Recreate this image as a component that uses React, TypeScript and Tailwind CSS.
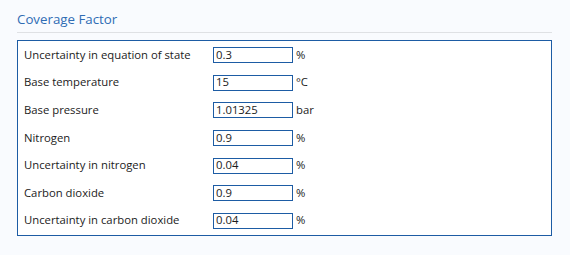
import React from "react";

interface Field {
  label: string;
  value: string;
  unit: string;
}

const fields: Field[] = [
  { label: "Uncertainty in equation of state", value: "0.3", unit: "%" },
  { label: "Base temperature", value: "15", unit: "°C" },
  { label: "Base pressure", value: "1.01325", unit: "bar" },
  { label: "Nitrogen", value: "0.9", unit: "%" },
  { label: "Uncertainty in nitrogen", value: "0.04", unit: "%" },
  { label: "Carbon dioxide", value: "0.9", unit: "%" },
  { label: "Uncertainty in carbon dioxide", value: "0.04", unit: "%" },
];

const FieldRow = ({ field }: { field: Field }) => (
  <div className="flex items-center h-[16px]">
    <div className="w-[189px] text-[11.3px] text-[#1b1b1b]">{field.label}</div>
    <input
      className="w-[80px] h-[16px] border border-[#1d5ca4] bg-white px-[2px] text-[11.3px] text-[#1b1b1b] outline-none"
      defaultValue={field.value}
    />
    <div className="ml-[3px] text-[11.3px] text-[#1b1b1b]">{field.unit}</div>
  </div>
);

const App = () => {
  return (
    <div
      className="w-[570px] h-[255px] bg-[#f9fbfe] px-[17px] pt-[10px]"
      style={{ fontFamily: '"Open Sans", "Noto Sans", sans-serif' }}
    >
      <div className="text-[13.3px] leading-[19px] text-[#2f6cb4]">Coverage Factor</div>
      <div className="mt-[3px] w-[535px] h-px bg-[#dfe1e4]" />
      <div className="mt-[7px] w-[535px] h-[196px] border border-[#1d5ca4] bg-white pl-[6px] pt-[6px] flex flex-col gap-[11.67px]">
        {fields.map((f) => (
          <FieldRow key={f.label} field={f} />
        ))}
      </div>
    </div>
  );
};

export default App;
